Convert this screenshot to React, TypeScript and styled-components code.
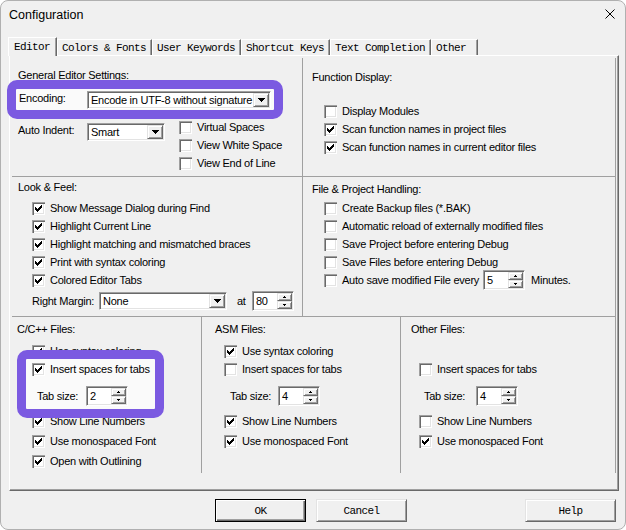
import { FC, ReactNode } from 'react';
import styled, { createGlobalStyle, css } from 'styled-components';

const GlobalStyle = createGlobalStyle`
  * {
    box-sizing: border-box;
  }

  html,
  body {
    margin: 0;
    padding: 0;
    background: #ffffff;
  }

  body {
    font-family: 'Liberation Sans', Arial, sans-serif;
    font-size: 11px;
    letter-spacing: -0.25px;
    color: #000000;
  }
`;

// classic 3D edges
const sunken = css`
  border: 1px solid;
  border-color: #a0a0a0 #ffffff #ffffff #a0a0a0;
  box-shadow: inset 1px 1px 0 #696969, inset -1px -1px 0 #e3e3e3;
  background: #ffffff;
`;

const raised = css`
  border: 1px solid;
  border-color: #e3e3e3 #696969 #696969 #e3e3e3;
  box-shadow: inset 1px 1px 0 #ffffff, inset -1px -1px 0 #a0a0a0;
  background: #f0f0f0;
`;

const mono = css`
  font-family: 'Liberation Mono', 'Courier New', monospace;
  font-size: 11px;
  letter-spacing: -0.6px;
`;

const Window = styled.div`
  width: 626px;
  height: 530px;
  display: flex;
  flex-direction: column;
  background: #f0f0f0;
  border: 1px solid #b0b0b0;
  border-radius: 8px;
  overflow: hidden;
`;

const TitleBar = styled.div`
  height: 28px;
  flex: none;
  display: flex;
  align-items: center;
  justify-content: space-between;
  padding: 0 10px 0 8px;
  font-size: 12.5px;
  letter-spacing: 0;
`;

const Close = styled.svg`
  width: 10px;
  height: 10px;
  margin-top: -2px;
`;

const Body = styled.div`
  flex: 1;
  display: flex;
  flex-direction: column;
  padding: 8px 6px 0 8px;
`;

const TabStrip = styled.div`
  display: flex;
  align-items: flex-end;
  height: 18px;
  margin-left: -1px;
  position: relative;
  z-index: 1;
`;

const Tab = styled.div<{ $active?: boolean; $minWidth?: number }>`
  ${mono};
  display: flex;
  align-items: center;
  height: ${({ $active }) => ($active ? 19 : 16)}px;
  margin-bottom: ${({ $active }) => ($active ? -1 : 0)}px;
  min-width: ${({ $minWidth }) => $minWidth ?? 0}px;
  padding: ${({ $active }) => ($active ? '0 6px 0 5px' : '0 5px 0 4px')};
  background: #f0f0f0;
  border-top: 1px solid #ffffff;
  border-left: 1px solid #ffffff;
  border-right: 1px solid #696969;
  box-shadow: inset -1px 0 0 #a0a0a0;
  white-space: nowrap;
`;

const Panel = styled.div`
  height: 436px;
  flex: none;
  display: flex;
  flex-direction: column;
  padding: 2px 1px 16px 2px;
  border-top: 1px solid #ffffff;
  border-left: 1px solid #ffffff;
  border-right: 1px solid #696969;
  border-bottom: 1px solid #696969;
  box-shadow: inset -1px -1px 0 #a0a0a0;
`;

const SectionRow = styled.div<{ $cols: string; $height: number }>`
  display: grid;
  grid-template-columns: ${({ $cols }) => $cols};
  height: ${({ $height }) => $height}px;
  flex: none;
`;

const Section = styled.div<{ $left: number; $top: number; $last?: boolean }>`
  display: flex;
  flex-direction: column;
  align-items: flex-start;
  min-width: 0;
  padding: ${({ $top, $left }) => `${$top}px 0 0 ${$left}px`};
  border-right: 1px solid #a0a0a0;
  border-bottom: ${({ $last }) => ($last ? 'none' : '1px solid #a0a0a0')};
`;

const Heading = styled.div`
  line-height: 14px;
  white-space: nowrap;
`;

const Highlight = styled.div<{ $width: number; $ml?: number; $mt?: number; $mb?: number; $pad: string }>`
  position: relative;
  z-index: 2;
  width: ${({ $width }) => $width}px;
  margin: ${({ $mt = 0, $mb = 0, $ml = 0 }) => `${$mt}px 0 ${$mb}px ${$ml}px`};
  padding: ${({ $pad }) => $pad};
  border: 9px solid #7b5ae1;
  border-radius: 10px;
  background: #fafafa;
`;

const CheckList = styled.div<{ $mt?: number; $gap?: number; $ml?: number }>`
  display: flex;
  flex-direction: column;
  margin-top: ${({ $mt }) => $mt ?? 0}px;
  margin-left: ${({ $ml }) => $ml ?? 0}px;
  gap: ${({ $gap }) => $gap ?? 0}px;
`;

const CheckRow = styled.label<{ $indent?: number; $mt?: number }>`
  display: flex;
  align-items: center;
  gap: 5px;
  height: 18px;
  padding-left: ${({ $indent }) => $indent ?? 0}px;
  margin-top: ${({ $mt }) => $mt ?? 0}px;
  white-space: nowrap;
  line-height: 14px;
`;

const Box = styled.span`
  width: 13px;
  height: 13px;
  flex: none;
  display: flex;
  background: #ffffff;
  box-shadow: inset 1px 1px 0 #a0a0a0, inset 2px 2px 0 #696969, inset -1px -1px 0 #ffffff,
    inset -2px -2px 0 #e3e3e3;
`;

const FieldRow = styled.div<{ $indent?: number; $mt?: number; $align?: string; $height?: number }>`
  display: flex;
  align-items: ${({ $align }) => $align ?? 'center'};
  height: ${({ $height }) => ($height ? `${$height}px` : 'auto')};
  padding-left: ${({ $indent }) => $indent ?? 0}px;
  margin-top: ${({ $mt }) => $mt ?? 0}px;
`;

const FieldLabel = styled.span<{ $width?: number; $ml?: number; $mt?: number }>`
  flex: none;
  width: ${({ $width }) => ($width ? `${$width}px` : 'auto')};
  margin-left: ${({ $ml }) => $ml ?? 0}px;
  margin-top: ${({ $mt }) => $mt ?? 0}px;
  line-height: 14px;
  white-space: nowrap;
`;

const Select = styled.div<{ $width: number; $mt?: number }>`
  ${sunken};
  width: ${({ $width }) => $width}px;
  height: 18px;
  flex: none;
  display: flex;
  align-items: center;
  margin-top: ${({ $mt }) => $mt ?? 0}px;
  padding: 1px 1px 1px 3px;
`;

const SelectText = styled.span`
  flex: 1;
  min-width: 0;
  overflow: hidden;
  white-space: nowrap;
  line-height: 14px;
`;

const DropButton = styled.span`
  ${raised};
  width: 16px;
  height: 14px;
  flex: none;
  display: flex;
  align-items: center;
  justify-content: center;
`;

const SpinField = styled.div<{ $ml?: number }>`
  ${sunken};
  width: 42px;
  height: 20px;
  flex: none;
  display: flex;
  margin-left: ${({ $ml }) => $ml ?? 0}px;
  padding: 1px 1px 1px 3px;
`;

const SpinValue = styled.span`
  flex: 1;
  line-height: 16px;
`;

const SpinButtons = styled.span`
  width: 15px;
  display: flex;
  flex-direction: column;
`;

const SpinButton = styled.span`
  ${raised};
  flex: 1;
  display: flex;
  align-items: center;
  justify-content: center;
`;

const ButtonRow = styled.div`
  display: flex;
  gap: 10px;
  margin-top: 8px;
  padding: 0 3px 0 206px;
`;

const PushButton = styled.button<{ $default?: boolean; $push?: boolean }>`
  ${mono};
  ${raised};
  width: 91px;
  height: 23px;
  padding: 0;
  color: #000000;
  margin-left: ${({ $push }) => ($push ? 'auto' : '0')};

  ${({ $default }) =>
    $default &&
    css`
      border-color: #000000;
      box-shadow: inset 1px 1px 0 #ffffff, inset -1px -1px 0 #696969, inset -2px -2px 0 #a0a0a0;
    `}
`;

const Check: FC<{ checked?: boolean }> = ({ checked }) => (
  <Box>
    {checked && (
      <svg width="13" height="13" viewBox="0 0 13 13" shapeRendering="crispEdges">
        <path
          d="M9 3h1v1H9zM8 4h2v1H8zM3 5h1v1H3zM7 5h3v1H7zM3 6h2v1H3zM6 6h3v1H6zM3 7h5v1H3zM4 8h3v1H4zM5 9h1v1H5z"
          fill="#000"
        />
      </svg>
    )}
  </Box>
);

const Option: FC<{ checked?: boolean; indent?: number; mt?: number; children?: ReactNode }> = ({
  checked,
  indent,
  mt,
  children,
}) => (
  <CheckRow $indent={indent} $mt={mt}>
    <Check checked={checked} />
    {children}
  </CheckRow>
);

const Dropdown: FC<{ width: number; value: string; mt?: number }> = ({ width, value, mt }) => (
  <Select $width={width} $mt={mt}>
    <SelectText>{value}</SelectText>
    <DropButton>
      <svg width="7" height="4" viewBox="0 0 7 4" shapeRendering="crispEdges">
        <path d="M0 0h7v1H0zM1 1h5v1H1zM2 2h3v1H2zM3 3h1v1H3z" fill="#000" />
      </svg>
    </DropButton>
  </Select>
);

const Spinner: FC<{ value: string; ml?: number }> = ({ value, ml }) => (
  <SpinField $ml={ml}>
    <SpinValue>{value}</SpinValue>
    <SpinButtons>
      <SpinButton>
        <svg width="3" height="2" viewBox="0 0 3 2" shapeRendering="crispEdges">
          <path d="M1 0h1v1H1zM0 1h3v1H0z" fill="#000" />
        </svg>
      </SpinButton>
      <SpinButton>
        <svg width="3" height="2" viewBox="0 0 3 2" shapeRendering="crispEdges">
          <path d="M0 0h3v1H0zM1 1h1v1H1z" fill="#000" />
        </svg>
      </SpinButton>
    </SpinButtons>
  </SpinField>
);

const TabSize: FC<{ indent: number; labelWidth: number; value: string }> = ({ indent, labelWidth, value }) => (
  <FieldRow $indent={indent} $mt={8} $height={20}>
    <FieldLabel $width={labelWidth}>Tab size:</FieldLabel>
    <Spinner value={value} />
  </FieldRow>
);

const tabs = ['Editor', 'Colors & Fonts', 'User Keywords', 'Shortcut Keys', 'Text Completion', 'Other'];

const App: FC = () => {
  return (
    <>
      <GlobalStyle />
      <Window>
        <TitleBar>
          <span>Configuration</span>
          <Close viewBox="0 0 10 10">
            <path d="M0.5 0.5L9.5 9.5M9.5 0.5L0.5 9.5" stroke="#000" strokeWidth="1" fill="none" />
          </Close>
        </TitleBar>

        <Body>
          {/* Tabs */}
          <TabStrip>
            {tabs.map((name, i) => (
              <Tab key={name} $active={i === 0} $minWidth={name === 'Other' ? 47 : 0}>
                {name}
              </Tab>
            ))}
          </TabStrip>

          <Panel>
            <SectionRow $cols="291px 313px" $height={119}>
              {/* General editor settings */}
              <Section $left={6} $top={10}>
                <Heading>General Editor Settings:</Heading>
                <Highlight $width={276} $ml={-11} $mt={-2} $pad="2px 3px 1px 3px">
                  <FieldRow $align="flex-start">
                    <FieldLabel $width={68}>Encoding:</FieldLabel>
                    <Dropdown width={184} value="Encode in UTF-8 without signature" />
                  </FieldRow>
                </Highlight>
                <FieldRow $align="flex-start" $mt={-1}>
                  <FieldRow $align="flex-start" $mt={5}>
                    <FieldLabel $width={69}>Auto Indent:</FieldLabel>
                    <Dropdown width={78} value="Smart" />
                  </FieldRow>
                  <CheckList $ml={14}>
                    <Option>Virtual Spaces</Option>
                    <Option>View White Space</Option>
                    <Option>View End of Line</Option>
                  </CheckList>
                </FieldRow>
              </Section>

              {/* Function display */}
              <Section $left={9} $top={12}>
                <Heading>Function Display:</Heading>
                <CheckList $mt={18}>
                  <Option indent={12}>Display Modules</Option>
                  <Option indent={12} checked>
                    Scan function names in project files
                  </Option>
                  <Option indent={12} checked>
                    Scan function names in current editor files
                  </Option>
                </CheckList>
              </Section>
            </SectionRow>

            <SectionRow $cols="291px 313px" $height={140}>
              {/* Look & feel */}
              <Section $left={6} $top={3}>
                <Heading>Look &amp; Feel:</Heading>
                <CheckList $mt={5}>
                  <Option indent={14} checked>
                    Show Message Dialog during Find
                  </Option>
                  <Option indent={14} checked>
                    Highlight Current Line
                  </Option>
                  <Option indent={14} checked>
                    Highlight matching and mismatched braces
                  </Option>
                  <Option indent={14} checked>
                    Print with syntax coloring
                  </Option>
                  <Option indent={14} checked>
                    Colored Editor Tabs
                  </Option>
                </CheckList>
                <FieldRow $indent={14} $mt={3} $height={18}>
                  <FieldLabel $width={67}>Right Margin:</FieldLabel>
                  <Dropdown width={128} value="None" />
                  <FieldLabel $width={15} $ml={10}>
                    at
                  </FieldLabel>
                  <Spinner value="80" />
                </FieldRow>
              </Section>

              {/* File & project handling */}
              <Section $left={9} $top={5}>
                <Heading>File &amp; Project Handling:</Heading>
                <CheckList $mt={3}>
                  <Option indent={12}>Create Backup files (*.BAK)</Option>
                  <Option indent={12}>Automatic reload of externally modified files</Option>
                  <Option indent={12}>Save Project before entering Debug</Option>
                  <Option indent={12}>Save Files before entering Debug</Option>
                  <FieldRow $height={18}>
                    <Option indent={12}>Auto save modified File every</Option>
                    <Spinner value="5" ml={4} />
                    <FieldLabel $ml={6}>Minutes.</FieldLabel>
                  </FieldRow>
                </CheckList>
              </Section>
            </SectionRow>

            <SectionRow $cols="190px 199px 215px" $height={156}>
              {/* C/C++ files */}
              <Section $left={5} $top={5} $last>
                <Heading>C/C++ Files:</Heading>
                <Option indent={15} mt={6} checked>
                  Use syntax coloring
                </Option>
                <Highlight $width={147} $mt={-10} $mb={-6} $pad="1px 0 3px 0">
                  <Option indent={6} checked>
                    Insert spaces for tabs
                  </Option>
                  <TabSize indent={11} labelWidth={49} value="2" />
                </Highlight>
                <CheckList $gap={2}>
                  <Option indent={15} checked>
                    Show Line Numbers
                  </Option>
                  <Option indent={15} checked>
                    Use monospaced Font
                  </Option>
                  <Option indent={15} checked>
                    Open with Outlining
                  </Option>
                </CheckList>
              </Section>

              {/* ASM files */}
              <Section $left={13} $top={5} $last>
                <Heading>ASM Files:</Heading>
                <Option indent={9} mt={6} checked>
                  Use syntax coloring
                </Option>
                <Option indent={9}>Insert spaces for tabs</Option>
                <TabSize indent={15} labelWidth={48} value="4" />
                <CheckList $mt={6} $gap={2}>
                  <Option indent={9} checked>
                    Show Line Numbers
                  </Option>
                  <Option indent={9} checked>
                    Use monospaced Font
                  </Option>
                </CheckList>
              </Section>

              {/* Other files */}
              <Section $left={10} $top={5} $last>
                <Heading>Other Files:</Heading>
                <CheckRow $mt={6} />
                <Option indent={8}>Insert spaces for tabs</Option>
                <TabSize indent={13} labelWidth={52} value="4" />
                <CheckList $mt={6} $gap={2}>
                  <Option indent={8}>Show Line Numbers</Option>
                  <Option indent={8} checked>
                    Use monospaced Font
                  </Option>
                </CheckList>
              </Section>
            </SectionRow>
          </Panel>

          <ButtonRow>
            <PushButton $default>OK</PushButton>
            <PushButton>Cancel</PushButton>
            <PushButton $push>Help</PushButton>
          </ButtonRow>
        </Body>
      </Window>
    </>
  );
};

export default App;
